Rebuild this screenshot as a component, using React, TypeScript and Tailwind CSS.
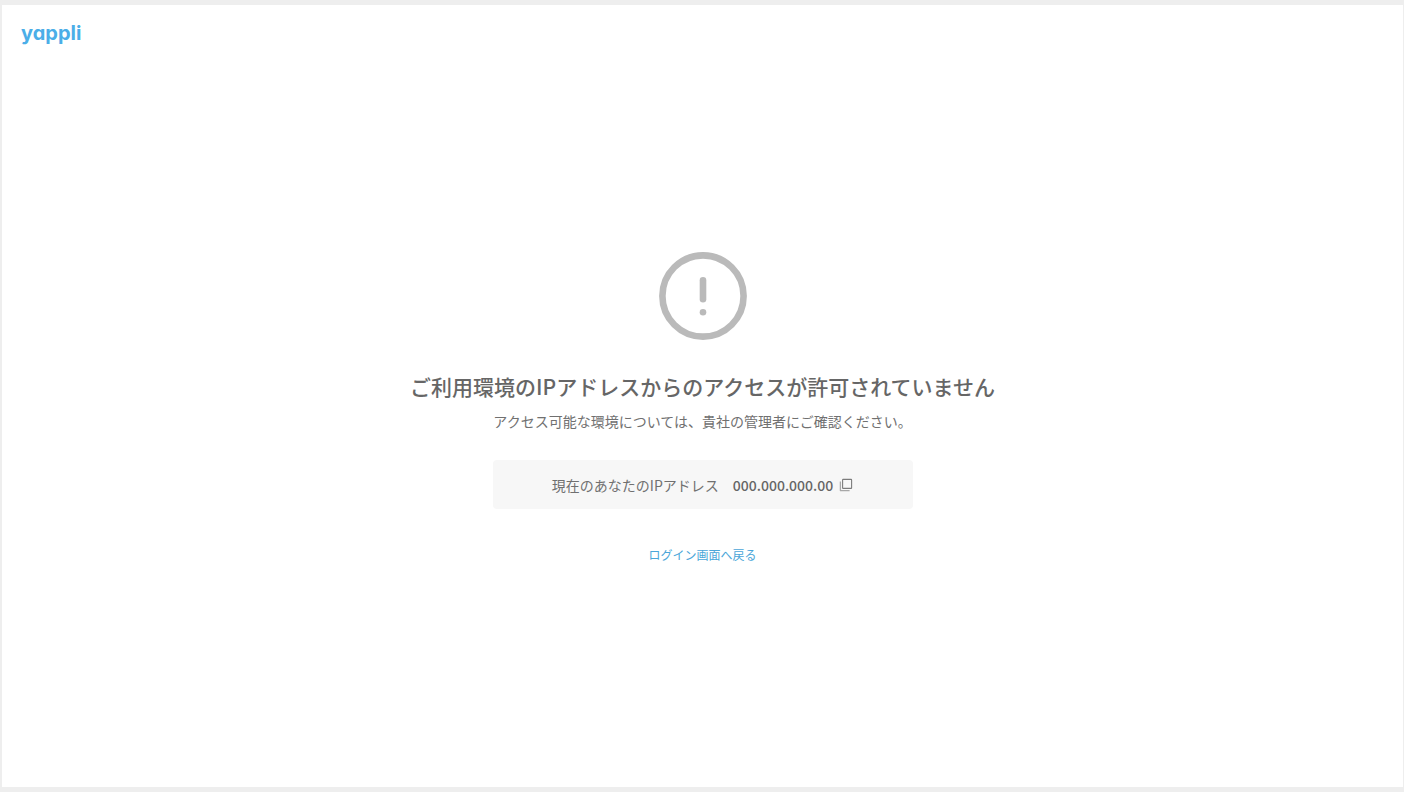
import { useState } from 'react';

const IP_ADDRESS = '000.000.000.00';

function AlertIcon() {
  return (
    <svg width="88" height="88" viewBox="0 0 88 88" fill="none" aria-hidden="true">
      <circle cx="44" cy="44" r="40.6" stroke="#bababa" strokeWidth="6.6" />
      <path d="M44 28.2V47.2" stroke="#bababa" strokeWidth="6.6" strokeLinecap="round" />
      <circle cx="44" cy="60.3" r="3.3" fill="#bababa" />
    </svg>
  );
}

function CopyIcon() {
  return (
    <svg width="14" height="14" viewBox="0 0 14 14" fill="none" aria-hidden="true">
      <rect x="3.6" y="1.4" width="9" height="9" rx="0.5" stroke="#7c7c7c" strokeWidth="1.1" />
      <path d="M1.4 3.4V12.6H10.6" stroke="#a8a8a8" strokeWidth="1.3" strokeLinejoin="round" />
    </svg>
  );
}

export default function App() {
  const [copied, setCopied] = useState(false);

  const handleCopy = () => {
    navigator.clipboard?.writeText(IP_ADDRESS);
    setCopied(true);
  };

  return (
    <div className="flex min-h-screen flex-col bg-[#eeeeee] py-[5px] pr-px pl-0.5 font-['Noto_Sans_CJK_JP',sans-serif] text-[#666666]">
      <div className="flex grow flex-col bg-white">
        <header className="flex h-14 items-center px-[19px]">
          <a
            href="#"
            className="font-['Inter',sans-serif] text-xl leading-7 font-bold text-[#4baee8] [font-feature-settings:'cv11']"
          >
            yappli
          </a>
        </header>

        <main className="flex grow flex-col items-center justify-center px-4 pb-[31px]">
          <AlertIcon />
          <h1 className="mt-[30px] text-center text-[21px] leading-8 font-medium">
            ご利用環境のIPアドレスからのアクセスが許可されていません
          </h1>
          <p className="mt-[9px] text-center text-sm text-[#707070]">
            アクセス可能な環境については、貴社の管理者にご確認ください。
          </p>

          <div className="mt-[29px] flex h-[49px] w-full max-w-[420px] items-center justify-center rounded bg-[#f7f7f7] text-sm">
            <span className="text-[#707070]">現在のあなたのIPアドレス</span>
            <span className="ml-3.5 font-medium">{IP_ADDRESS}</span>
            <button
              type="button"
              onClick={handleCopy}
              aria-label={copied ? 'コピーしました' : 'コピー'}
              className="ml-1.5 cursor-pointer"
            >
              <CopyIcon />
            </button>
          </div>

          <a href="#" className="mt-9 text-xs leading-5 text-[#4ba6d9] hover:underline">
            ログイン画面へ戻る
          </a>
        </main>
      </div>
    </div>
  );
}
